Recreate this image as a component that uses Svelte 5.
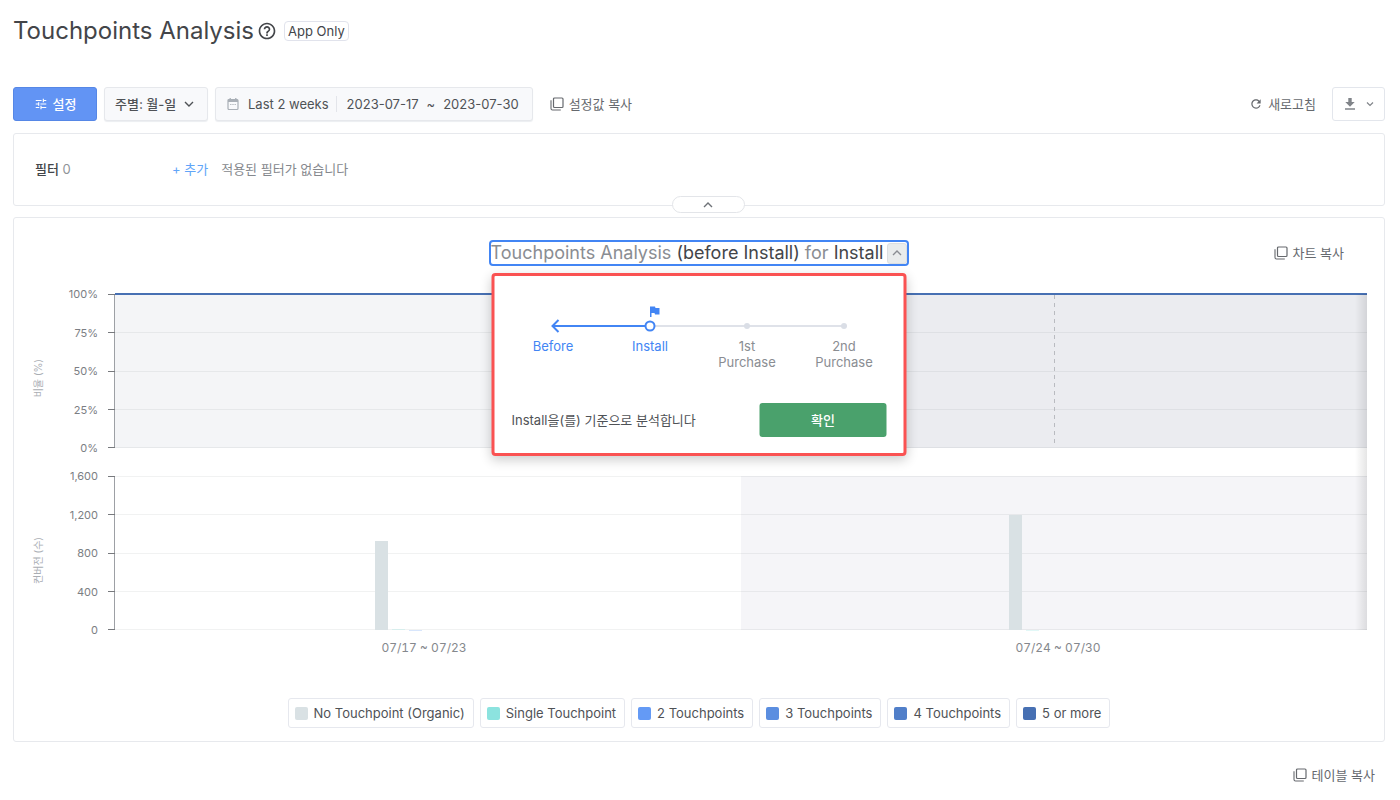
<script lang="ts">
	type Plot = { title: string; ticks: string[]; kind: "rate" | "count" }

	const plots: Plot[] = [
		{ title: "비율 (%)", ticks: ["100%", "75%", "50%", "25%", "0%"], kind: "rate" },
		{ title: "컨버전 (수)", ticks: ["1,600", "1,200", "800", "400", "0"], kind: "count" },
	]

	const series = [
		{ name: "No Touchpoint (Organic)", color: "#d9e1e4" },
		{ name: "Single Touchpoint", color: "#8ce3df" },
		{ name: "2 Touchpoints", color: "#649af5" },
		{ name: "3 Touchpoints", color: "#5b8ee0" },
		{ name: "4 Touchpoints", color: "#517fc9" },
		{ name: "5 or more", color: "#4770b3" },
	]

	const maxCount = 1600
	const weeks = [
		{ label: "07/17 ~ 07/23", counts: [930, 8, 4, 0, 0, 0] },
		{ label: "07/24 ~ 07/30", counts: [1192, 4, 0, 0, 0, 0] },
	]

	const steps = ["Before", "Install", "1st Purchase", "2nd Purchase"]

	let open = $state(true)
	let showFilters = $state(true)
</script>

{#snippet copyIcon()}
	<svg class="icon" width="14" height="14" viewBox="0 0 14 14" fill="none" stroke="currentColor" aria-hidden="true">
		<rect x="3.5" y="1" width="9.5" height="9.5" rx="1" stroke-width="1.2" />
		<path d="M1 3.2v8.3c0 .9.6 1.5 1.5 1.5h8.3" stroke-width="1.1" />
	</svg>
{/snippet}

{#snippet chevron(up: boolean)}
	<svg class="icon" width="10" height="10" viewBox="0 0 10 10" fill="none" stroke="currentColor" stroke-width="1.4" aria-hidden="true">
		<path d={up ? "M1 7l4-4 4 4" : "M1 3l4 4 4-4"} />
	</svg>
{/snippet}

<main>
	<header>
		<h1>Touchpoints Analysis</h1>
		<svg class="icon help" width="20" height="20" viewBox="0 0 24 24" fill="currentColor" aria-hidden="true">
			<path d="M11 18h2v-2h-2v2zm1-16C6.48 2 2 6.48 2 12s4.48 10 10 10 10-4.48 10-10S17.52 2 12 2zm0 18c-4.41 0-8-3.59-8-8s3.59-8 8-8 8 3.59 8 8-3.59 8-8 8zm0-14c-2.21 0-4 1.79-4 4h2c0-1.1.9-2 2-2s2 .9 2 2c0 2-3 1.75-3 5h2c0-2.25 3-2.5 3-5 0-2.21-1.79-4-4-4z" />
		</svg>
		<span class="badge">App Only</span>
	</header>

	<div class="toolbar">
		<button class="settings">
			<svg class="icon" width="14" height="14" viewBox="0 0 24 24" fill="currentColor" aria-hidden="true">
				<path d="M3 17v2h6v-2H3zM3 5v2h10V5H3zm10 16v-2h8v-2h-8v-2h-2v6h2zM7 9v2H3v2h4v2h2V9H7zm14 4v-2H11v2h10zm-6-4h2V7h4V5h-4V3h-2v6z" />
			</svg>
			설정
		</button>
		<div class="period">
			<select aria-label="기간 단위">
				<option>주별: 월-일</option>
			</select>
			<span class="arrow">{@render chevron(false)}</span>
		</div>
		<button class="dates">
			<svg class="icon" width="14" height="14" viewBox="0 0 14 14" fill="none" stroke="#a9afb6" aria-hidden="true">
				<rect x="2" y="2.5" width="10" height="10" rx="1" stroke-width="1.2" />
				<path d="M2 3.8h10" stroke-width="2.4" />
				<path d="M4.2 1v2M9.8 1v2" stroke-width="1.3" />
				<path d="M4.2 7.5h1.2M6.4 7.5h1.2M8.6 7.5h1.2" stroke-width="1.2" />
			</svg>
			<span class="preset">Last 2 weeks</span>
			<span>2023-07-17</span>
			<span>~</span>
			<span>2023-07-30</span>
		</button>
		<button class="link">{@render copyIcon()}설정값 복사</button>
		<button class="link refresh">
			<svg class="icon" width="14" height="14" viewBox="0 0 24 24" fill="currentColor" aria-hidden="true">
				<path d="M17.65 6.35C16.2 4.9 14.21 4 12 4c-4.42 0-7.99 3.58-7.99 8s3.57 8 7.99 8c3.73 0 6.84-2.55 7.73-6h-2.08c-.82 2.33-3.04 4-5.65 4-3.31 0-6-2.69-6-6s2.69-6 6-6c1.66 0 3.14.69 4.22 1.78L13 11h7V4l-2.35 2.35z" />
			</svg>
			새로고침
		</button>
		<button class="download" aria-label="다운로드">
			<svg class="icon" width="12" height="14" viewBox="0 0 12 14" fill="currentColor" aria-hidden="true">
				<path d="M4.3 1h3.4v4h3L6 9.8 1.3 5h3zM1 11.3h10v1.4H1z" />
			</svg>
			<svg class="icon" width="8" height="8" viewBox="0 0 8 8" fill="none" stroke="currentColor" stroke-width="1.2" aria-hidden="true">
				<path d="M1 2.5l3 3 3-3" />
			</svg>
		</button>
	</div>

	<section class="card filters">
		{#if showFilters}
			<h2>필터 <span>0</span></h2>
			<button class="add">+ 추가</button>
			<p>적용된 필터가 없습니다</p>
		{/if}
		<button class="collapse" aria-label="필터 접기" onclick={() => (showFilters = !showFilters)}>
			{@render chevron(showFilters)}
		</button>
	</section>

	<section class="card chart">
		<div class="chart-head">
			<div class="basis">
				<button class="basis-toggle" aria-expanded={open} onclick={() => (open = !open)}>
					<span>Touchpoints Analysis <b>(before Install)</b> for <b>Install</b></span>
					<span class="caret">{@render chevron(open)}</span>
				</button>

				{#if open}
					<div class="popup">
						<svg class="track" width="388" height="32" viewBox="0 0 388 32" fill="none" aria-hidden="true">
							<path d="M146 22h194" stroke="#dfe2e9" stroke-width="2" />
							<circle cx="242.5" cy="22" r="3" fill="#dadee6" />
							<circle cx="339.5" cy="22" r="3" fill="#dadee6" />
							<path d="M48 22h93" stroke="#4285f4" stroke-width="2" />
							<path d="M54 16l-6 6 6 6" stroke="#4285f4" stroke-width="2" />
							<circle cx="145.5" cy="22" r="4.5" fill="#fff" stroke="#4285f4" stroke-width="2" />
							<path d="M145.5 2.5h5l.5 1.5h4v6.5h-4.5l-.5-1.5h-3v4h-1.5z" fill="#4285f4" />
						</svg>
						<ol>
							{#each steps as step, i}
								<li class:active={i < 2}>{step}</li>
							{/each}
						</ol>
						<div class="popup-foot">
							<p>Install을(를) 기준으로 분석합니다</p>
							<button class="confirm" onclick={() => (open = false)}>확인</button>
						</div>
					</div>
				{/if}
			</div>
			<button class="link copy-chart">{@render copyIcon()}차트 복사</button>
		</div>

		<div class="plots">
			{#each plots as plot}
				<div class="plot-row">
					<div class="axis-title"><span>{plot.title}</span></div>
					<div class="ticks">
						{#each plot.ticks as tick}
							<span>{tick}</span>
						{/each}
					</div>
					<div class="plot {plot.kind}">
						<div class="band"></div>
						<div class="grid">
							{#each plot.ticks as _}
								<i></i>
							{/each}
						</div>
						{#if plot.kind == "rate"}
							<div class="full-line"></div>
							<svg class="cursor" width="1" height="152" aria-hidden="true">
								<path d="M.5 0v152" stroke="#b9bbc0" stroke-dasharray="4 4" />
							</svg>
						{:else}
							<div class="weeks">
								{#each weeks as week}
									<div class="bars">
										{#each week.counts as count, i}
											<div
												class:tiny={count < 10}
												style="height: {(count / maxCount) * 100}%; background: {series[i].color}"
											></div>
										{/each}
									</div>
								{/each}
							</div>
						{/if}
					</div>
				</div>
			{/each}
			<div class="edge"></div>
		</div>

		<div class="x-labels">
			{#each weeks as week}
				<span>{week.label}</span>
			{/each}
		</div>

		<div class="legend">
			{#each series as s}
				<button><i style="background: {s.color}"></i>{s.name}</button>
			{/each}
		</div>
	</section>

	<div class="table-head">
		<button class="link">{@render copyIcon()}테이블 복사</button>
	</div>
</main>

<style>
	:global(body) {
		background: #fff;
	}

	main {
		padding: 16px 15px 16px 13px;
		font-family: Inter, "Noto Sans CJK KR", sans-serif;
		font-size: 13px;
		line-height: 16px;
		color: #4f5256;
	}

	main, main * {
		box-sizing: border-box;
	}

	button, select {
		font: inherit;
		color: inherit;
		padding: 0;
		border: 0;
		background: none;
		cursor: pointer;
	}

	h1, h2, p, ol {
		margin: 0;
		padding: 0;
		font-weight: 400;
	}

	.icon {
		display: block;
		flex: none;
	}

	header {
		display: flex;
		align-items: center;
		height: 30px;
		color: #434549;
	}

	h1 {
		font-size: 24px;
		line-height: 32px;
	}

	.help {
		margin: 0 7px 0 3px;
	}

	.badge {
		height: 20px;
		padding: 0 3px;
		border: 1px solid #e1e3ec;
		border-radius: 4px;
		line-height: 18px;
	}

	.toolbar {
		display: flex;
		align-items: center;
		gap: 7px;
		height: 34px;
		margin: 41px 0 12px;
	}

	.settings {
		display: flex;
		align-items: center;
		justify-content: center;
		gap: 5px;
		width: 84px;
		height: 34px;
		border: 1px solid #5687e6;
		border-radius: 3px;
		background: #6294f4;
		color: #fff;
		font-weight: 500;
	}

	.period {
		position: relative;
	}

	.period select {
		width: 104px;
		appearance: none;
		padding: 0 10px;
		font-weight: 500;
	}

	.arrow {
		position: absolute;
		top: 12px;
		right: 14px;
		pointer-events: none;
	}

	.period select, .dates {
		height: 34px;
		border: 1px solid #e6e8ec;
		border-radius: 3px;
		background: #f8f9fb;
		box-shadow: 0 1px 1px #eceef1;
	}

	.dates {
		display: flex;
		align-items: center;
		gap: 8px;
		padding: 0 13px 0 10px;
	}

	.preset {
		margin-right: 2px;
		padding-right: 7px;
		border-right: 1px solid #e3e5ea;
	}

	.link {
		display: flex;
		align-items: center;
		gap: 5px;
		color: #66696e;
	}

	.toolbar .link {
		margin-left: 10px;
	}

	.toolbar .refresh {
		margin-left: auto;
	}

	.download {
		display: flex;
		align-items: center;
		justify-content: center;
		gap: 10px;
		width: 53px;
		height: 34px;
		margin-left: 9px;
		border: 1px solid #e3e6ec;
		border-radius: 3px;
		color: #808489;
	}

	.card {
		position: relative;
		border: 1px solid #e7e9ed;
		border-radius: 3px;
	}

	.filters {
		display: flex;
		align-items: center;
		min-height: 73px;
		padding: 0 21px 2px;
	}

	h2 {
		width: 137px;
		font-size: 13px;
		font-weight: 500;
		color: #434549;
	}

	h2 span {
		font-weight: 400;
		color: #8f9398;
	}

	.add {
		margin-right: 13px;
		color: #61a5f8;
	}

	.filters p {
		color: #85888d;
	}

	.collapse {
		position: absolute;
		left: 48%;
		bottom: -8px;
		display: flex;
		align-items: center;
		justify-content: center;
		width: 73px;
		height: 17px;
		border: 1px solid #e3e5e9;
		border-radius: 9px;
		background: #fff;
		color: #6e7277;
	}

	.chart {
		margin-top: 11px;
		padding: 22px 17px 13px 0;
	}

	.chart-head {
		display: grid;
		grid-template-columns: 1fr auto 1fr;
		align-items: center;
		padding: 0 23px 0 40px;
	}

	.basis {
		position: relative;
		grid-column: 2;
	}

	.basis-toggle {
		display: flex;
		align-items: center;
		gap: 4px;
		height: 26px;
		border: 2px solid #4285f4;
		border-radius: 4px;
		font-size: 18px;
		line-height: 24px;
		color: #8a8d92;
	}

	.basis-toggle b {
		font-weight: 400;
		color: #434549;
	}

	.caret {
		display: flex;
		align-items: center;
		justify-content: center;
		width: 20px;
		height: 21px;
		border: 1px solid #dcdfe1;
		border-radius: 3px;
		background: #e9ecec;
	}

	.copy-chart {
		justify-self: end;
	}

	.popup {
		position: absolute;
		z-index: 2;
		top: 33px;
		left: 50%;
		width: 415px;
		padding: 28px 17px 16px;
		border: 3px solid #fa5252;
		border-radius: 4px;
		background: #fff;
		box-shadow: 0 4px 12px rgba(0, 0, 0, 0.2);
		transform: translateX(-50%);
	}

	.track {
		display: block;
		margin: 0 -7px;
	}

	ol {
		display: flex;
		width: 388px;
		margin: 2px -7px 0;
		list-style: none;
		text-align: center;
		color: #8a8d92;
	}

	li {
		width: 97px;
		padding: 0 16px;
	}

	.active {
		color: #4285f4;
	}

	.popup-foot {
		display: flex;
		align-items: center;
		justify-content: space-between;
		margin-top: 33px;
	}

	.confirm {
		width: 127px;
		height: 34px;
		border-radius: 3px;
		background: #4aa16c;
		color: #fff;
		font-weight: 500;
	}

	.plots {
		position: relative;
		display: flex;
		flex-direction: column;
		gap: 28px;
		margin-top: 28px;
	}

	.plot-row {
		display: flex;
		height: 154px;
	}

	.axis-title {
		display: flex;
		align-items: center;
		justify-content: center;
		width: 48px;
		padding-top: 14px;
		font-size: 10px;
		color: #a9adb3;
	}

	.axis-title span {
		writing-mode: vertical-rl;
		text-orientation: sideways;
		transform: rotate(180deg);
	}

	.ticks {
		display: flex;
		flex-direction: column;
		justify-content: space-between;
		width: 36px;
		margin: -8px 16px -8px 0;
		font-size: 11px;
		text-align: right;
		color: #7b7e83;
	}

	.plot {
		position: relative;
		flex: 1;
		border-left: 1px solid #9da0a5;
	}

	.rate {
		background: #f4f5f7;
	}

	.band, .grid, .weeks {
		position: absolute;
		inset: 0;
	}

	.band {
		left: 50%;
		background: #f5f5f8;
	}

	.rate .band {
		background: #ebecf0;
	}

	.grid {
		display: flex;
		flex-direction: column;
		justify-content: space-between;
	}

	.grid i {
		display: flex;
		height: 1px;
		margin-left: -7px;
		background: rgba(60, 64, 72, 0.07);
	}

	.grid i::before {
		content: "";
		width: 7px;
		background: #77797d;
	}

	.full-line {
		position: absolute;
		top: -1px;
		left: 0;
		right: 0;
		height: 2px;
		background: #4770b3;
	}

	.cursor {
		position: absolute;
		top: 1px;
		left: 75%;
	}

	.weeks {
		display: flex;
		margin: 0 -8px;
	}

	.bars {
		flex: 1;
		display: flex;
		align-items: flex-end;
		justify-content: center;
		gap: 4px;
	}

	.bars div {
		width: 13px;
	}

	/* under a pixel tall, so keep it faint */
	.bars .tiny {
		opacity: 0.25;
	}

	.edge {
		position: absolute;
		top: 0;
		bottom: 0;
		right: 0;
		width: 12px;
		background: linear-gradient(to right, rgba(0, 0, 0, 0), rgba(0, 0, 0, 0.1));
	}

	.x-labels {
		display: flex;
		margin: 10px -8px 0 93px;
		font-size: 12px;
		font-variant-numeric: tabular-nums;
		color: #85888d;
	}

	.x-labels span {
		flex: 1;
		text-align: center;
	}

	.legend {
		display: flex;
		flex-wrap: wrap;
		justify-content: center;
		gap: 6px;
		margin: 42px -17px 0 0;
	}

	.legend button {
		display: flex;
		align-items: center;
		gap: 6px;
		height: 30px;
		padding: 0 8px 0 6px;
		border: 1px solid #e6e8ee;
		border-radius: 3px;
	}

	.legend i {
		width: 13px;
		height: 13px;
		border-radius: 2px;
	}

	.table-head {
		display: flex;
		justify-content: flex-end;
		margin-top: 25px;
		padding-right: 10px;
	}
</style>
